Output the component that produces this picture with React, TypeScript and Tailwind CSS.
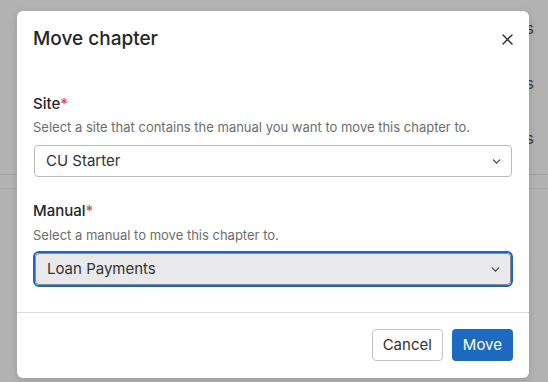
import React from 'react';
import { ChevronDown } from 'lucide-react';

const rows = ['Loans', 'Deposits', 'Policies'];

const SelectBox = ({ value, focused }: { value: string; focused?: boolean }) => {
	return (
		<div
			className={
				focused
					? 'rounded-[6px] border-2 border-[#1c66c0] p-0'
					: 'rounded-[4px] border border-transparent'
			}>
			<div
				className={
					focused
						? 'flex h-[32px] items-center justify-between rounded-[4px] border border-[#8d8d8d] bg-[#e9e9ec] pl-[11px] pr-[8px]'
						: 'flex h-[32px] items-center justify-between rounded-[4px] border border-[#bcbcbc] bg-white pl-[11px] pr-[8px]'
				}>
				<span className="text-[15px] leading-5 text-[#333]">{value}</span>
				<ChevronDown size={13} strokeWidth={2} className="text-[#3a3a3a]" />
			</div>
		</div>
	);
};

const App = () => {
	return (
		<div
			className="relative h-[382px] w-[548px] overflow-hidden bg-[#b3b3b3]"
			style={{ fontFamily: 'Inter, "Noto Sans", sans-serif' }}>
			{/* page behind the overlay */}
			<div className="flex flex-col">
				{rows.map((r) => (
					<div key={r} className="flex h-[55px] items-center justify-end pr-[14px]">
						<span className="text-[16px] text-[#3d3d3d]">{r}</span>
					</div>
				))}
				<div className="mt-[9px] h-px w-full bg-[#a4a4a4]" />
				<div className="mt-[13px] h-px w-full bg-[#a8a8a8]" />
			</div>

			{/* dialog */}
			<div className="absolute left-[17px] top-[11px] w-[512px] rounded-[6px] bg-white shadow-[0_2px_8px_rgba(0,0,0,0.15)]">
				<div className="flex items-center justify-between px-4 pt-[14px]">
					<h2 className="text-[19px] font-medium leading-7 text-[#262626]">Move chapter</h2>
					<svg width="11" height="11" viewBox="0 0 11 11" className="text-[#2a2a2a]">
						<path d="M1 1L10 10M10 1L1 10" stroke="currentColor" strokeWidth="1.4" strokeLinecap="round" />
					</svg>
				</div>

				<div className="px-4 pb-[25px] pt-[41px]">
					<div className="flex flex-col">
						<label className="text-[15px] font-medium leading-5 text-[#262626]">
							Site<span className="text-[#e04b3c]">*</span>
						</label>
						<p className="mt-[4px] text-[13px] leading-[18px] text-[#6d6d6d]">
							Select a site that contains the manual you want to move this chapter to.
						</p>
						<div className="mt-[8px]">
							<SelectBox value="CU Starter" />
						</div>
					</div>

					<div className="mt-[23px] flex flex-col">
						<label className="text-[15px] font-medium leading-5 text-[#262626]">
							Manual<span className="text-[#e04b3c]">*</span>
						</label>
						<p className="mt-[5px] text-[13px] leading-[18px] text-[#6d6d6d]">
							Select a manual to move this chapter to.
						</p>
						<div className="mt-[7px]">
							<SelectBox value="Loan Payments" focused />
						</div>
					</div>
				</div>

				<div className="h-px w-full bg-[#dcdcdc]" />

				<div className="flex justify-end gap-[9px] px-4 pb-[17px] pt-[16px]">
					<button className="h-[32px] rounded-[4px] border border-[#c4c4c4] bg-white px-[10px] text-[15px] text-[#333]">
						Cancel
					</button>
					<button className="h-[32px] rounded-[4px] bg-[#1f6ac1] px-[11px] text-[15px] text-white">
						Move
					</button>
				</div>
			</div>
		</div>
	);
};

export default App;
